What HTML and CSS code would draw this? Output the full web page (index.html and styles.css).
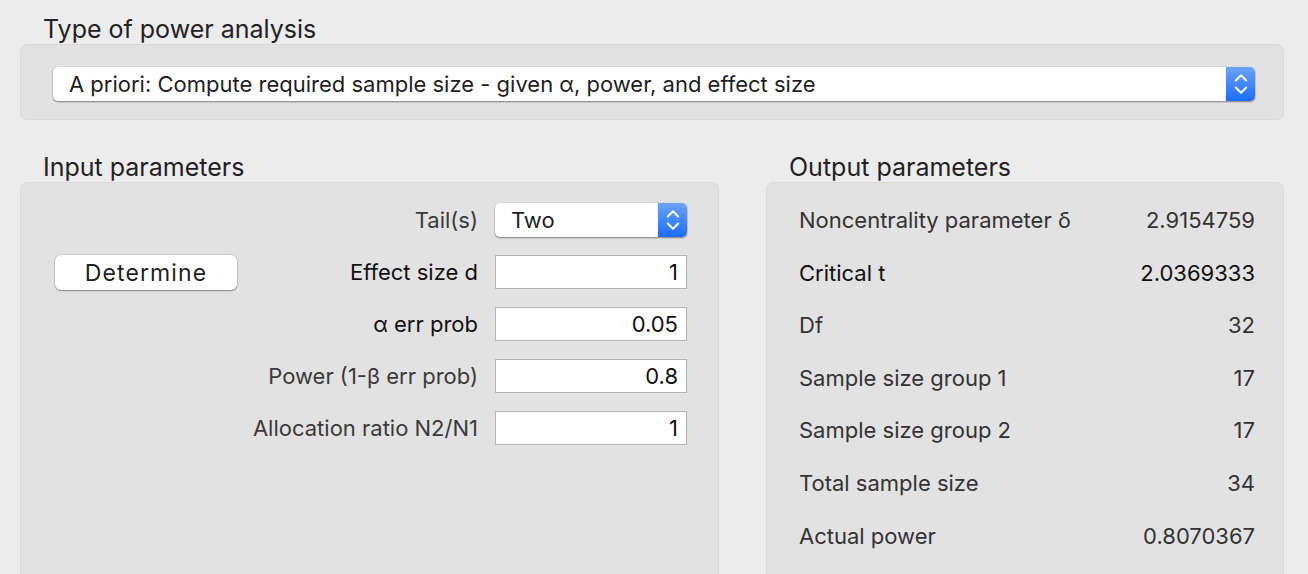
FILE: index.html
```html
<!DOCTYPE html>
<html>
<head>
<meta charset="utf-8">
<link rel="stylesheet" href="styles.css">
</head>
<body>
<div class="page">
  <section class="type-section">
    <h2 class="group-title">Type of power analysis</h2>
    <div class="group type-group">
      <div class="popup wide">
        <span class="popup-text">A priori: Compute required sample size - given α, power, and effect size</span>
        <span class="stepper"><svg width="14" height="22" viewBox="0 0 14 22"><path d="M1.8 7.5 L7 2.3 L12.2 7.5 M1.8 14.5 L7 19.7 L12.2 14.5" fill="none" stroke="#fff" stroke-width="2" stroke-linecap="round" stroke-linejoin="round"/></svg></span>
      </div>
    </div>
  </section>
  <div class="columns">
    <section class="col col-input">
      <h2 class="group-title">Input parameters</h2>
      <div class="group input-group">
        <div class="determine-col">
          <button class="btn">Determine</button>
        </div>
        <div class="form">
          <div class="row">
            <span class="label">Tail(s)</span>
            <div class="popup small">
              <span class="popup-text">Two</span>
              <span class="stepper"><svg width="14" height="22" viewBox="0 0 14 22"><path d="M1.8 7.5 L7 2.3 L12.2 7.5 M1.8 14.5 L7 19.7 L12.2 14.5" fill="none" stroke="#fff" stroke-width="2" stroke-linecap="round" stroke-linejoin="round"/></svg></span>
            </div>
          </div>
          <div class="row">
            <span class="label dark">Effect size d</span>
            <div class="field">1</div>
          </div>
          <div class="row">
            <span class="label dark">α err prob</span>
            <div class="field">0.05</div>
          </div>
          <div class="row">
            <span class="label">Power (1-β err prob)</span>
            <div class="field">0.8</div>
          </div>
          <div class="row">
            <span class="label">Allocation ratio N2/N1</span>
            <div class="field">1</div>
          </div>
        </div>
      </div>
    </section>
    <section class="col col-output">
      <h2 class="group-title">Output parameters</h2>
      <div class="group output-group">
        <div class="orow"><span>Noncentrality parameter δ</span><span>2.9154759</span></div>
        <div class="orow dark"><span>Critical t</span><span>2.0369333</span></div>
        <div class="orow"><span>Df</span><span>32</span></div>
        <div class="orow"><span>Sample size group 1</span><span>17</span></div>
        <div class="orow"><span>Sample size group 2</span><span>17</span></div>
        <div class="orow"><span>Total sample size</span><span>34</span></div>
        <div class="orow"><span>Actual power</span><span>0.8070367</span></div>
      </div>
    </section>
  </div>
</div>
</body>
</html>
```

FILE: styles.css
```css
html, body {
  margin: 0;
  padding: 0;
  background: #ececec;
  overflow: hidden;
}
body {
  font-family: Inter, "Liberation Sans", Arial, sans-serif;
  color: #2a2a2a;
  font-size: 22px;
  height: 574px;
}
.page {
  padding: 14px 24px 0 20px;
}
.group-title {
  font-weight: normal;
  font-size: 25px;
  margin: 0 0 0 23px;
  line-height: 30px;
  color: #222;
}
.group {
  background: #e2e2e2;
  border: 1px solid #d9d9d9;
  border-radius: 7px;
  box-sizing: border-box;
}
.type-group {
  height: 76px;
  padding: 22px 28px 0 32px;
}
.popup {
  display: flex;
  align-items: stretch;
  background: #fff;
  border-radius: 5px;
  box-shadow: 0 0.5px 0 1px rgba(0,0,0,0.08), 0 1px 1.5px rgba(0,0,0,0.35);
  height: 34px;
  box-sizing: border-box;
  overflow: hidden;
}
.popup-text {
  flex: 1;
  padding-left: 16px;
  line-height: 34px;
  color: #1e1e1e;
}
.stepper {
  width: 29px;
  background: linear-gradient(#6aa4fb, #1a6cfb);
  display: flex;
  align-items: center;
  justify-content: center;
}
.columns {
  display: flex;
  gap: 47px;
  margin-top: 32px;
}
.col-input { width: 699px; }
.col-output { width: 518px; }
.input-group, .output-group {
  height: 400px;
}
.input-group {
  display: flex;
  padding: 20px 31px 0 34px;
}
.determine-col {
  width: 182px;
  padding-top: 52px;
}
.btn {
  width: 182px;
  height: 35px;
  border: none;
  background: #fff;
  border-radius: 6px;
  box-shadow: 0 0 0 0.5px rgba(0,0,0,0.18), 0 1px 1.5px rgba(0,0,0,0.35);
  font-family: inherit;
  font-size: 23px;
  letter-spacing: 1.1px;
  color: #1e1e1e;
  padding: 0;
}
.form {
  flex: 1;
  display: flex;
  flex-direction: column;
  gap: 18px;
}
.row {
  display: flex;
  align-items: center;
  justify-content: flex-end;
  gap: 17px;
  height: 34px;
}
.label {
  color: #3a3a3a;
}
.label.dark { color: #111; }
.popup.small {
  width: 192px;
}
.field {
  width: 192px;
  height: 34px;
  box-sizing: border-box;
  background: #fff;
  border: 1px solid #b4b4b4;
  text-align: right;
  padding-right: 8px;
  line-height: 32px;
  color: #111;
}
.output-group {
  padding: 19px 28px 0 32px;
}
.orow {
  display: flex;
  justify-content: space-between;
  height: 52.6px;
  line-height: 36px;
  color: #333;
}
.orow.dark { color: #111; }
```
